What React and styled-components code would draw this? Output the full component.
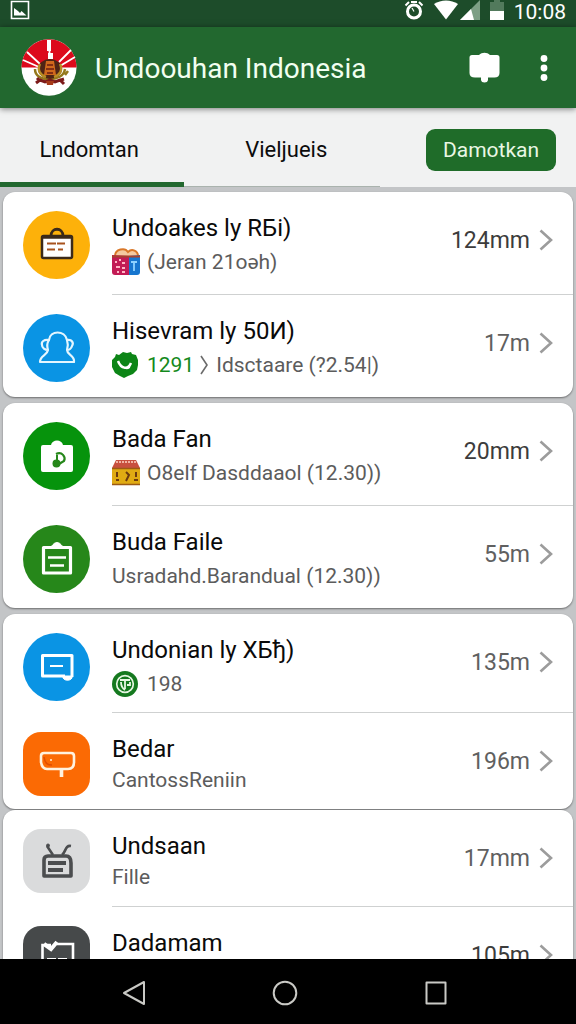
import styled, { createGlobalStyle } from 'styled-components';

const groups = [
  {
    id: 'latest',
    rows: [
      {
        title: 'Undoakes ly RБi)',
        icon: 'briefcase',
        color: '#fdb10a',
        badge: 'gift',
        text: '(Jeran 21oəh)',
        time: '124mm',
        strong: true,
      },
      {
        title: 'Hisevram ly 50И)',
        icon: 'people',
        color: '#0a94e4',
        badge: 'check',
        count: '1291',
        text: 'Idsctaare (?2.54|)',
        time: '17m',
      },
    ],
  },
  {
    id: 'files',
    rows: [
      {
        title: 'Bada Fan',
        icon: 'bag',
        color: '#06930c',
        badge: 'shop',
        text: 'O8elf Dasddaaol (12.30))',
        time: '20mm',
        strong: true,
      },
      {
        title: 'Buda Faile',
        icon: 'clipboard',
        color: '#26871a',
        text: 'Usradahd.Barandual (12.30))',
        time: '55m',
      },
    ],
  },
  {
    id: 'messages',
    rows: [
      {
        title: 'Undonian ly XБђ)',
        icon: 'message',
        color: '#0a94e4',
        badge: 'coin',
        text: '198',
        time: '135m',
        size: 'medium',
      },
      {
        title: 'Bedar',
        icon: 'sign',
        color: '#fb6a04',
        square: true,
        text: 'CantossReniin',
        time: '196m',
        size: 'small',
      },
    ],
  },
  {
    id: 'other',
    rows: [
      {
        title: 'Undsaan',
        icon: 'robot',
        color: '#dadbdc',
        square: true,
        text: 'Fille',
        time: '17mm',
        size: 'small',
      },
      {
        title: 'Dadamam',
        icon: 'board',
        color: '#46494a',
        square: true,
        time: '105m',
        size: 'small',
        strong: true,
      },
    ],
  },
];

export default function App() {
  return (
    <>
      <GlobalStyle />
      <S.Screen>
        <StatusBar />
        <Header />
        <Tabs />
        <S.List>
          {groups.map((group) => (
            <S.Card key={group.id}>
              {group.rows.map((row) => (
                <Row key={row.title} {...row} />
              ))}
            </S.Card>
          ))}
        </S.List>
        <SystemNav />
      </S.Screen>
    </>
  );
}

function StatusBar() {
  return (
    <S.StatusBar>
      <svg width='20' height='20' viewBox='0 0 20 20' fill='none'>
        <path d='M1.5 1.5h17v17h-17z' stroke='#fff' strokeWidth='1.6' />
        <path d='M4 15.5V8l4 3 2 2 1.500-2 5 4.500z' fill='#fff' />
      </svg>
      <S.StatusIcons>
        <S.Alarm width='20' height='20' viewBox='0 0 20 20' fill='none' stroke='#fff'>
          <circle cx='10' cy='11.500' r='6.500' strokeWidth='3' />
          <path d='M1.500 5.500 5 2M18.500 5.500 15 2M7 2h6' strokeWidth='2' />
          <path d='M8 8l2 3.500' strokeWidth='1.200' />
        </S.Alarm>
        <svg width='24' height='20' viewBox='0 0 24 20'>
          <path d='M0 4C7-.8 17-.8 24 4L12 19.500z' fill='#fff' />
        </svg>
        <svg width='20' height='20' viewBox='0 0 20 20'>
          <path d='M20 0v20H0z' fill='#7d9f85' />
          <path d='M11 9l3 11H0z' fill='#fff' />
        </svg>
        <S.Battery width='14' height='20' viewBox='0 0 14 20'>
          <path d='M4 0h6v2h4v9H0V2h4z' fill='#527a5c' />
          <path d='M0 11h14v9H0z' fill='#fff' />
        </S.Battery>
        <S.Clock>10:08</S.Clock>
      </S.StatusIcons>
    </S.StatusBar>
  );
}

function Header() {
  return (
    <S.Header>
      <Emblem />
      <h1>Undoouhan Indonesia</h1>
      <S.IconButton aria-label='Messages'>
        <svg width='31' height='31' viewBox='0 0 31 31' fill='#fff'>
          <path d='M3 3h7c3-3 8-3 11 0h7q2.500 0 2.500 2.500V21c0 3-2 4.500-5 4.500h-6.500V28q-.5 2.500-3.500 2.500T12 28v-2.500H6C2.500 25.500.5 24 .5 21V5.500Q.5 3 3 3z' />
        </svg>
      </S.IconButton>
      <S.IconButton aria-label='More options'>
        <svg width='8' height='26' viewBox='0 0 8 26' fill='#fff'>
          <circle cx='4' cy='3.500' r='3.400' />
          <circle cx='4' cy='13' r='3.400' />
          <circle cx='4' cy='22.500' r='3.400' />
        </svg>
      </S.IconButton>
    </S.Header>
  );
}

function Emblem() {
  return (
    <svg width='56' height='57' viewBox='0 0 56 57'>
      <ellipse cx='28' cy='28.500' rx='27.500' ry='28.300' fill='#fff' />
      <path d='M.5 28.500C.5 13 13 .2 28 .2s27.500 12.800 27.500 28.300z' fill='#dc0a1c' />
      <path
        d='M28.500 1v14M6 13l13 12M50 11 38 23M2 21l16 7M54 18l-15 9'
        stroke='#fff'
        strokeWidth='1.800'
      />
      <path d='M26 1h4v11h-4zM27 14h5v6h-5z' fill='#fff' />
      <path d='M14 30c0 7 6 10 14 10s15-3 16-10M44 36l3-4' fill='none' stroke='#94781c' strokeWidth='2.500' />
      <ellipse cx='29' cy='30' rx='12' ry='10' fill='#4f2415' />
      <path d='M19 25c-3 6 0 11 6 13M39 25c3 6 0 11-6 13' fill='none' stroke='#b98d22' strokeWidth='2.500' />
      <path d='M25 22h8l2 14h-12z' fill='#d0691d' />
      <path d='M26 26h6M25 30h8M26 34h6' stroke='#6b1d12' strokeWidth='1.500' />
      <path
        d='M15 44l4-3 5 2 5-2 5 2 5-2 4 4M18 41l-2-2M40 41l3-1'
        fill='none'
        stroke='#7c1a1a'
        strokeWidth='3'
      />
      <path d='M25 42h8l-1 4h-6z' fill='#a63a18' />
    </svg>
  );
}

function Tabs() {
  return (
    <S.Tabs>
      <S.Tab $active>Lndomtan</S.Tab>
      <S.Tab>Vieljueis</S.Tab>
      <S.TabAction>
        <S.Button>Damotkan</S.Button>
      </S.TabAction>
    </S.Tabs>
  );
}

function Row({ title, icon, color, square, badge, count, text, time, strong, size }) {
  return (
    <S.Row href='#' $size={size}>
      <S.Avatar $color={color} $square={square}>
        {avatarIcons[icon]}
      </S.Avatar>
      <S.Body>
        <S.Texts>
          <S.Title>{title}</S.Title>
          {text && (
            <S.Subtitle $small={size === 'small'}>
              {badge && badgeIcons[badge]}
              {count && (
                <S.Count>
                  {count}
                  <svg width='9' height='22' viewBox='0 0 9 22' fill='none'>
                    <path d='M1 2l6 9-6 9' stroke='#6b6b6b' strokeWidth='1.600' />
                  </svg>
                </S.Count>
              )}
              <span>{text}</span>
            </S.Subtitle>
          )}
        </S.Texts>
        <S.Time $strong={strong}>
          {time}
          <svg width='14' height='22' viewBox='0 0 14 22' fill='none'>
            <path d='M1.500 1.500 12 11 1.500 20.500' stroke='#9c9c9c' strokeWidth='2.600' />
          </svg>
        </S.Time>
      </S.Body>
    </S.Row>
  );
}

function SystemNav() {
  return (
    <S.SystemNav>
      <S.NavButton aria-label='Back'>
        <svg width='26' height='26' viewBox='0 0 26 26'>
          <path d='M23 2v22L3 13z' />
        </svg>
      </S.NavButton>
      <S.NavButton aria-label='Home'>
        <svg width='26' height='26' viewBox='0 0 26 26'>
          <circle cx='13' cy='13' r='11.300' />
        </svg>
      </S.NavButton>
      <S.NavButton aria-label='Recent apps'>
        <svg width='26' height='26' viewBox='0 0 26 26'>
          <path d='M3.500 2.500h19v21h-19z' />
        </svg>
      </S.NavButton>
    </S.SystemNav>
  );
}

const avatarIcons = {
  briefcase: (
    <svg viewBox='0 0 40 40' fill='none'>
      <path d='M14 11c0-9 12-9 12 0' stroke='#3b2a1a' strokeWidth='2.800' />
      <rect x='5' y='11' width='30' height='22' rx='1.500' fill='#fff' stroke='#3b2a1a' strokeWidth='2.500' />
      <path d='M5 12h30' stroke='#3b2a1a' strokeWidth='3.500' />
      <path d='M10 18.500h9M20 18.500h8M10 24.500h8M21 24.500h5' stroke='#a8521d' strokeWidth='2' />
    </svg>
  ),
  people: (
    <svg viewBox='0 0 40 40' fill='none' stroke='#e4f6ff' strokeWidth='2.200' strokeLinejoin='round'>
      <path d='M12 12c1-10 16-10 18 0 5-1 7 3 5 6-1 3-3 4-5 4 0 5 8 5 7 12H3c0-7 7-6 8-12-3 0-6-2-6-5-1-3 2-6 7-5z' />
      <path d='M12 12c-2 3-2 7-1 10M30 12c1 3 1 7 0 10' />
    </svg>
  ),
  bag: (
    <svg viewBox='0 0 40 40' fill='none'>
      <path d='M6 9h8c1-6 11-6 12 0h8q2 0 2 2v23q0 2-2 2H6q-2 0-2-2V11q0-2 2-2z' fill='#fff' />
      <path d='M19 18c6-3 10 3 8 7l-5 3' stroke='#26871a' strokeWidth='2.200' />
      <ellipse cx='19.500' cy='27.500' rx='4' ry='4' fill='#26871a' />
      <path d='M20 19v7' stroke='#26871a' strokeWidth='2' />
    </svg>
  ),
  clipboard: (
    <svg viewBox='0 0 40 40' fill='none' stroke='#fff'>
      <path d='M6.500 8.500h27V34h-27z' strokeWidth='3.200' strokeLinejoin='round' />
      <path d='M12 8.500c3 0 4-5 8-5s5 5 8 5z' fill='#fff' />
      <path d='M11 18.500h18M13 26.500h14' strokeWidth='2.600' />
    </svg>
  ),
  message: (
    <svg viewBox='0 0 40 40' fill='none' stroke='#fff'>
      <path d='M35 30V8.500H5.500V29H28' strokeWidth='3' strokeLinejoin='round' />
      <path d='M26 29h9v2c-2 3-7 3-9 0z' fill='#fff' />
      <path d='M13 19h13' strokeWidth='2' />
    </svg>
  ),
  sign: (
    <svg viewBox='0 0 40 40' fill='none' stroke='#fff2df' strokeLinejoin='round'>
      <path d='M7 9h27q3 0 3 3v6q0 7-6 7H10q-5 0-6-7v-6q0-3 3-3z' strokeWidth='2.600' />
      <path d='M24.500 25v8' strokeWidth='3.600' />
      <path d='M7 13c1 7 4 8 8 8' stroke='#e14d02' strokeWidth='1.500' />
      <circle cx='14' cy='16' r='1' fill='#fff2df' stroke='none' />
    </svg>
  ),
  robot: (
    <svg viewBox='0 0 40 40' fill='none' stroke='#4b4d4f'>
      <path d='M10 5l6 9M34 5c-6-1-5 6-9 9' strokeWidth='2.600' />
      <circle cx='11' cy='4.500' r='1.500' fill='#4b4d4f' />
      <path d='M7 19q0-4 4-4h18q5 0 5 7v13H7z' strokeWidth='3.600' strokeLinejoin='round' />
      <path d='M11 22h18M11 29h15' strokeWidth='4' />
    </svg>
  ),
  board: (
    <svg viewBox='0 0 40 40' fill='none' stroke='#fff'>
      <path d='M14 7H5.500v28H36V6H20' strokeWidth='2.600' />
      <path d='M7 6l7 5 6-7' strokeWidth='4' />
      <path d='M10 21h9M21 21h9M10 26h5M18 26h8' strokeWidth='2' />
    </svg>
  ),
};

const badgeIcons = {
  gift: (
    <svg viewBox='0 0 28 28' fill='none'>
      <path d='M3 8C3 1 13-1 16 4c4-4 10-1 10 4' stroke='#d97728' strokeWidth='2' fill='#f4c9a0' />
      <path d='M0 7l17 1v19H3q-3 0-3-3z' fill='#c21b55' />
      <path d='M17 8l11-1v17q0 3-3 3h-8z' fill='#1676cf' />
      <path d='M0 8.500h28' stroke='#a5432f' strokeWidth='2' />
      <path d='M3 14h2M7 12h2M10 15h3M4 19h4M10 20h3M5 24h2M10 24h3' stroke='#ffb5c5' strokeWidth='2' />
      <path d='M19 14h6M22 14v9' stroke='#8cd2ff' strokeWidth='1.800' />
    </svg>
  ),
  check: (
    <svg viewBox='0 0 28 28' fill='none'>
      <path d='M4 3l3 1 4-3 4 1 4-1 1 2 4 1 2 5v5l-1 5-4 4-5 2-4 2-4-2-5-3-3-6V9l3-3z' fill='#0c8516' />
      <path d='M6 10c3 8 10 9 13 2' stroke='#fff' strokeWidth='2.500' />
      <path d='M8 12c2 6 8 7 11 0l-1 5c-4 3-8 0-10-5z' fill='#fff' />
    </svg>
  ),
  shop: (
    <svg viewBox='0 0 28 28' fill='none'>
      <path d='M4 1h20l4 8H0z' fill='#c8503f' />
      <path d='M4 3h20' stroke='#f1b4a4' strokeWidth='2' strokeDasharray='2 1' />
      <path d='M0 9h28v17H0z' fill='#e0ab13' />
      <path d='M0 9.500h28M0 25.500h28' stroke='#9c5a14' strokeWidth='1.500' />
      <path d='M5 13v5M4 21h3M14 13l3 3-3 6M24 13v5M22 21h4' stroke='#6b3a10' strokeWidth='2' />
    </svg>
  ),
  coin: (
    <svg viewBox='0 0 28 28' fill='none'>
      <circle cx='13' cy='14' r='13' fill='#15791f' />
      <circle cx='13' cy='14' r='8.300' stroke='#e6f6e2' strokeWidth='1.700' />
      <path d='M8 10h10M13 10v9M9 12c0 4 1 6 4 8M18 12v3h-3' stroke='#e6f6e2' strokeWidth='1.800' />
    </svg>
  ),
};

// ---------------------------------- styling ----------------------------------
const rowHeights = { large: 102, medium: 98, small: 96 };

const GlobalStyle = createGlobalStyle`
  * {
    box-sizing: border-box;
  }

  body {
    margin: 0;
    font-family: Roboto, 'Liberation Sans', sans-serif;
    background-color: #c3c5c7;
  }

  h1, h2, p {
    margin: 0;
    font-weight: 400;
  }

  button {
    border: 0;
    padding: 0;
    background: none;
    font: inherit;
    cursor: pointer;
  }

  svg {
    display: block;
    flex-shrink: 0;
  }
`;

const S = {};
S.Screen = styled.div`
  height: 100vh;
  display: flex;
  flex-direction: column;
  overflow: hidden;
`;

S.StatusBar = styled.div`
  display: flex;
  justify-content: space-between;
  flex-shrink: 0;
  height: 27px;
  padding: 0 10px;
  color: #fff;
  background-color: #1d4c2a;
`;

S.StatusIcons = styled.div`
  display: flex;
  gap: 2px;
`;

S.Alarm = styled.svg`
  margin-right: 8px;
`;

S.Battery = styled.svg`
  margin: 0 8px;
`;

S.Clock = styled.span`
  font-size: 21px;
  line-height: 24px;
`;

S.Header = styled.header`
  position: relative;
  z-index: 1;
  display: flex;
  align-items: center;
  gap: 12px;
  flex-shrink: 0;
  height: 81px;
  padding: 0 24px 0 21px;
  color: #f2fff0;
  background-color: #22682f;
  box-shadow: 0 1px 6px rgba(0, 0, 0, 0.5);

  h1 {
    flex: 1;
    padding: 2px 0 0 6px;
    font-size: 28px;
    line-height: 40px;
    white-space: nowrap;
  }
`;

S.IconButton = styled.button`
  padding: 0 4px;

  & + & {
    margin-left: 20px;
  }
`;

S.Tabs = styled.nav`
  display: flex;
  flex-shrink: 0;
  height: 79px;
  background-color: #f1f2f2;
`;

S.Tab = styled.button`
  flex: 0 0 ${({ $active }) => ($active ? '32%' : '34%')};
  padding: ${({ $active }) => ($active ? '8px 6px 0 0' : '4px 0 0 8px')};
  font-size: 22px;
  color: #0c0c0c;
  border-bottom: ${({ $active }) => ($active ? '5px solid #22682f' : '1px solid #aab3ae')};
`;

S.TabAction = styled.div`
  flex: 1;
  display: flex;
  align-items: center;
  justify-content: flex-end;
  padding: 4px 20px 0 0;
`;

S.Button = styled.button`
  width: 130px;
  height: 42px;
  border-radius: 9px;
  font-size: 21px;
  color: #e9f7e4;
  background-color: #1f6c29;
`;

S.List = styled.main`
  flex: 1;
  min-height: 0;
  overflow: hidden;
  padding: 5px 3px 0;
`;

S.Card = styled.section`
  margin-bottom: 6px;
  border-radius: 12px;
  overflow: hidden;
  background-color: #fff;
  box-shadow: 0 1px 2px rgba(0, 0, 0, 0.45);

  &:nth-child(n + 3) {
    margin-bottom: 1px;
  }
`;

S.Row = styled.a`
  display: flex;
  gap: 22px;
  padding-left: 20px;
  color: inherit;
  text-decoration: none;
  min-height: ${({ $size }) => rowHeights[$size || 'large']}px;

  & + & {
    margin-top: 1px;
  }
`;

S.Avatar = styled.div`
  display: flex;
  align-items: center;
  justify-content: center;
  flex-shrink: 0;
  width: 67px;
  height: ${({ $square }) => ($square ? '64px' : '68px')};
  margin-top: 19px;
  border-radius: ${({ $square }) => ($square ? '18px' : '50%')};
  background-color: ${({ $color }) => $color};

  svg {
    width: 40px;
    height: 40px;
  }
`;

S.Body = styled.div`
  flex: 1;
  min-width: 0;
  display: flex;
  justify-content: space-between;
  padding: 20px 20px 0 0;

  ${S.Row}:not(:last-child) & {
    box-shadow: 0 1px 0 #cfd1d1;
  }
`;

S.Texts = styled.div`
  min-width: 0;
  white-space: nowrap;
`;

S.Title = styled.h2`
  font-size: 24px;
  line-height: 32px;
  color: #0a0a0a;
`;

S.Subtitle = styled.p`
  display: flex;
  align-items: center;
  gap: 7px;
  font-size: 21px;
  line-height: ${({ $small }) => ($small ? '30px' : '36px')};
  color: #5c5c5c;

  > svg {
    width: 28px;
    height: 28px;
  }
`;

S.Count = styled.span`
  display: flex;
  align-items: center;
  gap: 6px;
  color: #148a1c;
`;

S.Time = styled.span`
  display: flex;
  align-items: center;
  gap: 9px;
  height: 56px;
  font-size: 23px;
  color: ${({ $strong }) => ($strong ? '#3c3c3c' : '#606060')};
`;

S.SystemNav = styled.nav`
  position: relative;
  display: flex;
  align-items: center;
  justify-content: space-between;
  flex-shrink: 0;
  height: 65px;
  padding: 2px 22% 0 21%;
  background-color: #000;
`;

S.NavButton = styled.button`
  svg {
    fill: none;
    stroke: #c9c9c5;
    stroke-width: 2px;
    stroke-linejoin: round;
  }
`;
